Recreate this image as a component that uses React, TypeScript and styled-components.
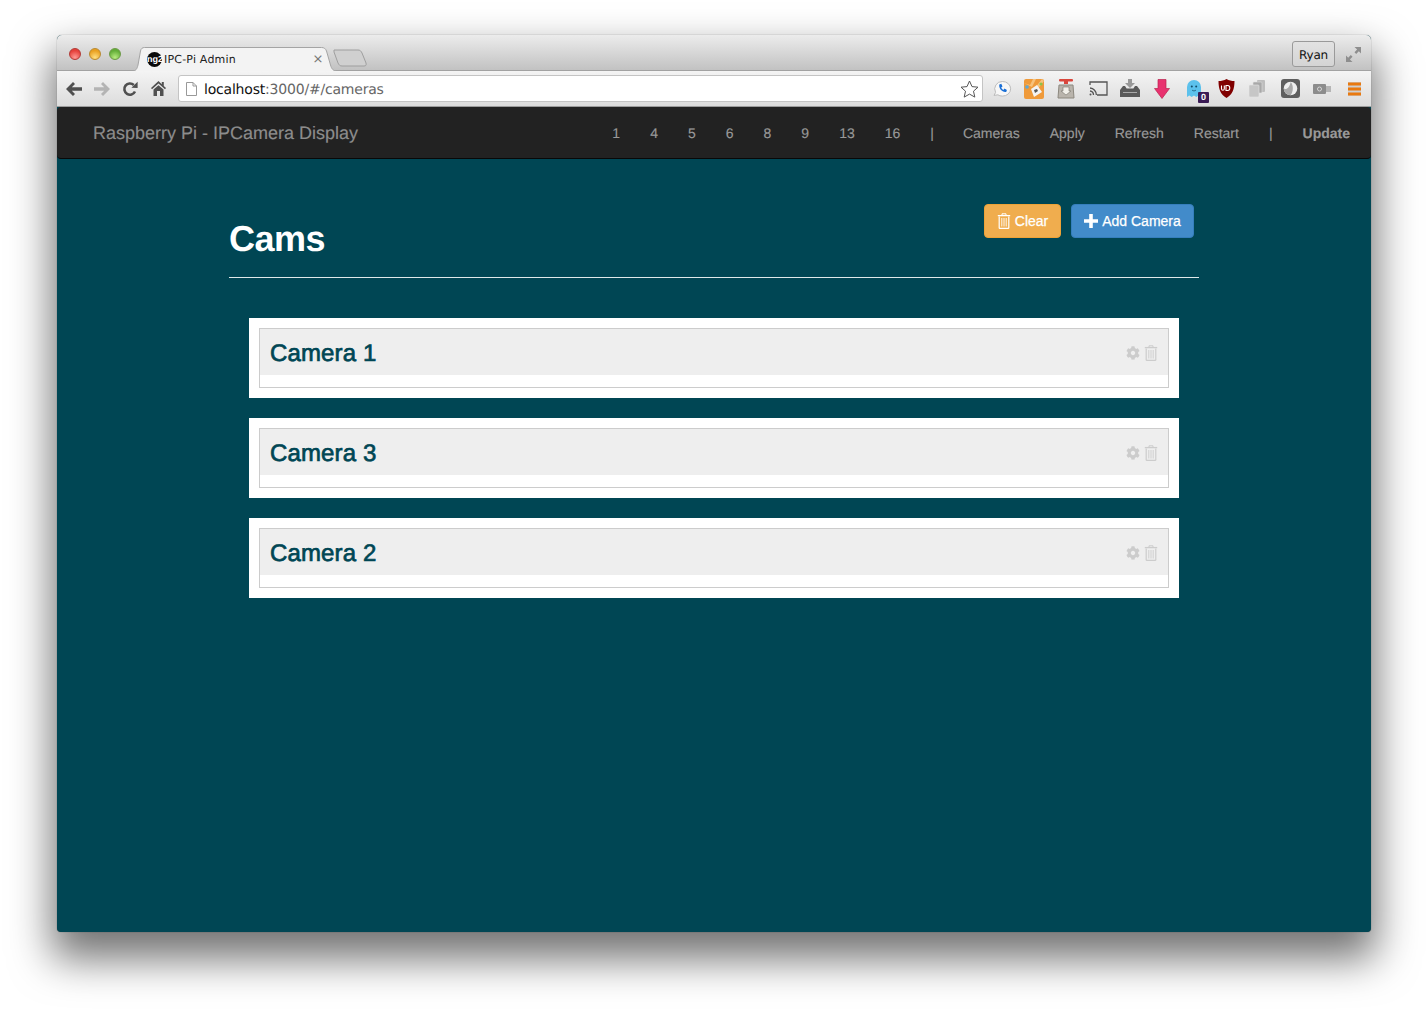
import styled, { createGlobalStyle } from "styled-components";
import { FaCog } from "react-icons/fa";

const GlobalStyle = createGlobalStyle`
  html, body {
    margin: 0;
    padding: 0;
    background: #fff;
    font-family: "Liberation Sans", Arial, sans-serif;
    text-rendering: geometricPrecision;
  }
`;

const Desktop = styled.div`
  width: 1428px;
  height: 1011px;
  box-sizing: border-box;
  padding: 35px 57px 79px;
  overflow: hidden;
`;

const BrowserWindow = styled.div`
  height: 897px;
  display: flex;
  flex-direction: column;
  background: #004654;
  border-radius: 5px 5px 4px 4px;
  overflow: hidden;
  box-shadow: 0 22px 42px 5px rgba(0, 0, 0, 0.55), 0 0 1px rgba(0, 0, 0, 0.6);
`;

const TitleBar = styled.div`
  height: 36px;
  flex: none;
  box-sizing: border-box;
  display: flex;
  align-items: flex-end;
  padding-left: 12px;
  background: linear-gradient(#ececec, #c2c2c2);
  border-bottom: 1px solid #a2a2a2;
`;

const Lights = styled.div`
  display: flex;
  gap: 8px;
  align-self: flex-start;
  margin-top: 13px;
`;

const Light = styled.span<{ $color: string; $glow: string; $edge: string }>`
  width: 12px;
  height: 12px;
  border-radius: 50%;
  box-sizing: border-box;
  border: 1px solid ${({ $edge }) => $edge};
  background: radial-gradient(circle at 50% 85%, ${({ $glow }) => $glow} 0%, ${({ $color }) => $color} 70%);
`;

const Tab = styled.div`
  position: relative;
  width: 205px;
  height: 24px;
  margin-left: 11px;
  margin-bottom: -1px;
  display: flex;
  align-items: center;
  padding: 0 6px 0 15px;
  box-sizing: border-box;
  font-family: "DejaVu Sans", sans-serif;
  font-size: 11px;
  letter-spacing: 0.2px;
  color: #222;
`;

const TabShape = styled.svg`
  position: absolute;
  left: 0;
  top: 0;
`;

const Favicon = styled.span`
  position: relative;
  width: 15px;
  height: 15px;
  border-radius: 50%;
  background: #0a0a0a;
  color: #fff;
  font-family: "Liberation Sans", sans-serif;
  font-weight: bold;
  font-size: 9px;
  letter-spacing: 0;
  line-height: 15px;
  text-align: center;
  flex: none;
  margin-right: 2px;
`;

const TabTitle = styled.span`
  position: relative;
  flex: 1;
`;

const TabClose = styled.span`
  position: relative;
  width: 26px;
  color: #777;
  font-size: 13px;
  text-align: center;
`;

const NewTab = styled.svg`
  margin-left: -4px;
  margin-bottom: 3px;
`;

const TitleRight = styled.div`
  margin-left: auto;
  align-self: flex-start;
  display: flex;
  align-items: center;
  gap: 11px;
  padding: 6px 10px 0 0;
`;

const UserButton = styled.div`
  width: 43px;
  height: 26px;
  box-sizing: border-box;
  border: 1px solid #9a9a9a;
  border-radius: 3px;
  font-family: "DejaVu Sans", sans-serif;
  font-size: 12px;
  letter-spacing: -0.2px;
  line-height: 26px;
  text-align: center;
  color: #111;
  background: linear-gradient(#e2e2e2, #d4d4d4);
`;

const Toolbar = styled.div`
  height: 36px;
  flex: none;
  box-sizing: border-box;
  display: flex;
  align-items: center;
  padding-left: 3px;
  background: linear-gradient(#f4f4f4, #dcdcdc);
  border-bottom: 1px solid #9c9c9c;
`;

const NavButton = styled.div`
  width: 28px;
  height: 28px;
  display: flex;
  align-items: center;
  justify-content: center;
`;

const AddressBar = styled.div`
  width: 805px;
  height: 27px;
  margin-left: 6px;
  box-sizing: border-box;
  display: flex;
  align-items: center;
  padding: 0 3px 0 7px;
  background: #fff;
  border: 1px solid #c4c4c4;
  border-radius: 3px;
`;

const Url = styled.div`
  margin-left: 7px;
  padding-top: 2px;
  flex: 1;
  font-family: "DejaVu Sans", sans-serif;
  font-size: 14px;
  letter-spacing: -0.2px;
  color: #666;
`;

const UrlHost = styled.span`
  color: #111;
`;

const Extensions = styled.div`
  display: flex;
  margin-left: 3px;
`;

const Extension = styled.div`
  position: relative;
  width: 32px;
  height: 28px;
  display: flex;
  align-items: center;
  justify-content: center;
`;

const CountBadge = styled.span`
  position: absolute;
  left: 20px;
  top: 17px;
  width: 11px;
  height: 11px;
  border-radius: 1px;
  background: #3a1a54;
  color: #fff;
  font-size: 9px;
  font-weight: bold;
  line-height: 11px;
  text-align: center;
`;

const Navbar = styled.nav`
  height: 52px;
  flex: none;
  box-sizing: border-box;
  display: flex;
  align-items: center;
  padding: 0 21px 0 36px;
  background: #222;
  border-bottom: 1px solid #080808;
  border-radius: 4px;
  -webkit-text-stroke: 0.15px currentColor;
`;

const Brand = styled.a`
  padding-top: 2px;
  font-size: 18px;
  color: #8c8c8c;
`;

const NavLinks = styled.div`
  margin-left: auto;
  display: flex;
  gap: 29px;
  font-size: 14px;
  color: #999;
`;

const NavGroup = styled.div`
  display: flex;
  gap: 30px;
`;

const NavLink = styled.a<{ $strong?: boolean }>`
  font-weight: ${({ $strong }) => ($strong ? "bold" : "normal")};
`;

const Main = styled.main`
  flex: 1;
  padding: 45px 172px 0;
`;

const PageHeader = styled.header`
  height: 73px;
  display: flex;
  justify-content: space-between;
  align-items: flex-start;
  padding-right: 5px;
  border-bottom: 1px solid #dfe9ea;
`;

const Title = styled.h1`
  margin: 15px 0 0;
  font-size: 36px;
  line-height: 40px;
  font-weight: bold;
  letter-spacing: -0.5px;
  color: #fff;
`;

const Actions = styled.div`
  display: flex;
  gap: 10px;
`;

const Button = styled.button<{ $color: string; $edge: string; $width: number }>`
  width: ${({ $width }) => $width}px;
  height: 34px;
  padding: 0;
  display: flex;
  align-items: center;
  justify-content: center;
  gap: 4px;
  font-family: inherit;
  font-size: 14px;
  color: #fff;
  background: ${({ $color }) => $color};
  border: 1px solid ${({ $edge }) => $edge};
  border-radius: 4px;
  -webkit-text-stroke: 0.25px #fff;
`;

const CameraList = styled.section`
  margin-top: 40px;
  padding: 0 20px;
  display: flex;
  flex-direction: column;
  gap: 20px;
`;

const CameraCard = styled.article`
  background: #fff;
  padding: 10px;
`;

const Panel = styled.div`
  height: 60px;
  box-sizing: border-box;
  border: 1px solid #ccc;
`;

const PanelHeading = styled.div`
  height: 46px;
  box-sizing: border-box;
  display: flex;
  align-items: center;
  justify-content: space-between;
  padding: 2px 10px 0;
  background: #eee;
`;

const CameraName = styled.h2`
  margin: 0;
  padding-top: 2px;
  font-size: 24px;
  font-weight: normal;
  letter-spacing: 0.15px;
  color: #004654;
  -webkit-text-stroke: 0.7px #004654;
`;

const PanelIcons = styled.div`
  display: flex;
  align-items: center;
  gap: 4px;
  color: #ccc;
`;

const TrashIcon = ({ color, size = 14 }: { color: string; size?: number }) => (
  <svg width={size} height={size + 2} viewBox="0 0 14 16" fill="none" stroke={color}>
    <path d="M5 2.200V.8h4v1.400" strokeWidth="1" />
    <path d="M.8 2.600h12.400" strokeWidth="1.300" />
    <path d="M2.200 3.500v11.200c0 .4.300.7.7.7h8.200c.4 0 .7-.3.7-.7V3.500" strokeWidth="1.200" />
    <path d="M4.800 5v8.500M7 5v8.500M9.200 5v8.500" strokeWidth=".9" />
  </svg>
);

const PlusIcon = () => (
  <svg width="14" height="14" viewBox="0 0 14 14" fill="#fff">
    <path d="M5.200 0h3.600v5.200H14v3.600H8.800V14H5.200V8.800H0V5.200h5.200z" />
  </svg>
);

const BackIcon = ({ color }: { color: string }) => (
  <svg width="16" height="14" viewBox="0 0 16 14" fill={color}>
    <path d="M7 0l2 2-3.200 3.300H16v3.400H5.800L9 12l-2 2-7-7z" />
  </svg>
);

const ForwardIcon = ({ color }: { color: string }) => (
  <svg width="16" height="14" viewBox="0 0 16 14" fill={color}>
    <path d="M9 0L7 2l3.200 3.300H0v3.400h10.200L7 12l2 2 7-7z" />
  </svg>
);

const ReloadIcon = () => (
  <svg width="16" height="16" viewBox="0 0 16 16" fill="none">
    <path d="M13 10.500A5.600 5.600 0 1 1 11.800 4" stroke="#505050" strokeWidth="2.600" />
    <path d="M9.400 6.800L15.600 7V.8z" fill="#505050" />
  </svg>
);

const HomeIcon = () => (
  <svg width="15" height="15" viewBox="0 0 15 15" fill="#505050">
    <path d="M7.500 0L0 7l1 1.200L7.500 2.400 14 8.200 15 7l-2.200-2V1h-2v2.200z" />
    <path d="M2.500 8.600L7.500 4.200l5 4.400V15H9V10H6v5H2.500z" />
  </svg>
);

const PageIcon = () => (
  <svg width="11" height="14" viewBox="0 0 11 14" fill="#fff" stroke="#999">
    <path d="M.5.5h6.500l3.500 3.500v9.500H.5z" />
    <path d="M7 .5V4h3.500" fill="none" />
  </svg>
);

const StarIcon = () => (
  <svg width="19" height="18" viewBox="0 0 19 18" fill="#fff" stroke="#555">
    <path d="M9.500 1l2.500 5.600 6 .6-4.500 4 1.300 5.900-5.300-3-5.300 3 1.300-5.900-4.500-4 6-.6z" />
  </svg>
);

const PhoneBubbleIcon = () => (
  <svg width="20" height="18" viewBox="0 0 20 18">
    <path d="M10.500 1.500a8 7.200 0 0 1 0 14.600c-2 0-3.400-.5-4.600-1.300L2 15.400l1.600-3A7.400 7.400 0 0 1 10.500 1.500z" fill="#f7f7f7" stroke="#bbb" />
    <path d="M7.300 4.500l2-.7 1.200 2.700-1.300 1c.4 1 1.200 1.900 2.200 2.400l1.100-1.300 2.400 1.300-.7 2c-3.800.7-7.600-3.300-6.900-7.400z" fill="#1a6fd6" />
  </svg>
);

const ToolsIcon = () => (
  <svg width="20" height="20" viewBox="0 0 20 20">
    <rect width="20" height="20" rx="2" fill="#ef9a3a" />
    <path d="M0 4l6 2 3-6h3L8 8zM20 2l-7 9-2-2 7-9z" fill="#f7c27c" />
    <path d="M7 10l6-4 5 7-8 5z" fill="#f4f4f4" />
    <path d="M10 11l3-1 1 2-3 2z" fill="#555" />
    <circle cx="3" cy="8" r="1.800" fill="#5da9d8" />
    <circle cx="17" cy="5" r="1.600" fill="#8bc34a" />
  </svg>
);

const TransmissionIcon = () => (
  <svg width="18" height="20" viewBox="0 0 18 20">
    <rect x="2" y="0" width="14" height="2.600" rx="1" fill="#d9463c" />
    <rect x="7" y="0" width="4" height="5" fill="#d9463c" />
    <path d="M2 6h14l1 13H1z" fill="#b9b4ac" stroke="#8c887f" />
    <path d="M6 8h6v4h2l-5 4-5-4h2z" fill="#f1efe9" stroke="#77736c" strokeWidth=".6" />
  </svg>
);

const CastIcon = () => (
  <svg width="19" height="15" viewBox="0 0 19 15" fill="none" stroke="#555" strokeWidth="1.300">
    <path d="M1 4V1h17v13H8" />
    <path d="M1 7a7 7 0 0 1 6.400 7M1 10a4 4 0 0 1 3.500 4" />
    <circle cx="1.500" cy="13.500" r="1" fill="#555" stroke="none" />
  </svg>
);

const InboxIcon = () => (
  <svg width="20" height="19" viewBox="0 0 20 19" fill="#5a5a5a">
    <path d="M8 0h4v4h3l-5 5-5-5h3z" fill="#999" />
    <path d="M3 7h2l1.600 2.500h6.800L15 7h2l3 4v7H0v-7z" />
    <path d="M3 13h14v1H3z" fill="#a9a9a9" />
  </svg>
);

const DownArrowIcon = () => (
  <svg width="16" height="20" viewBox="0 0 16 20">
    <path d="M4 .5h8v9h3.500L8 19.500.5 9.500H4z" fill="#e8316f" stroke="#b9244f" strokeWidth=".7" />
  </svg>
);

const GhostIcon = () => (
  <svg width="14" height="17" viewBox="0 0 14 17">
    <path d="M0 17V7a7 7 0 0 1 14 0v10l-2.300-1.600L9.300 17 7 15.400 4.700 17l-2.400-1.600z" fill="#5cc1ec" />
    <circle cx="4.800" cy="6.500" r="1" fill="#134a66" />
    <circle cx="9.200" cy="6.500" r="1" fill="#134a66" />
    <path d="M5 10c1 1.200 3 1.200 4 0" fill="none" stroke="#134a66" strokeWidth=".7" />
  </svg>
);

const ShieldIcon = () => (
  <svg width="17" height="19" viewBox="0 0 17 19">
    <path d="M8.500 0c2.500 1.400 5 2 8 2 0 8-2 13.600-8 17C2.500 15.600.5 10 .5 2c3 0 5.500-.6 8-2z" fill="#800000" />
    <path d="M3.500 6.500v3.300c0 2 2.800 2 2.800 0V6.500M8 6.500h1.700c2.800 0 2.800 5 0 5H8z" fill="none" stroke="#fff" strokeWidth="1.100" />
  </svg>
);

const CopyIcon = () => (
  <svg width="18" height="17" viewBox="0 0 18 17">
    <rect x="8" y="0" width="8" height="12" rx="1" fill="#bdbdbd" />
    <rect x="4" y="2" width="9" height="11" rx="1" fill="#a8a8a8" stroke="#ddd" strokeWidth=".6" />
    <rect x="0" y="5" width="10" height="12" rx="1" fill="#c6c6c6" stroke="#e4e4e4" strokeWidth=".6" />
  </svg>
);

const LensIcon = () => (
  <svg width="19" height="19" viewBox="0 0 19 19">
    <rect width="19" height="19" rx="3" fill="#5e5e5e" />
    <circle cx="9.500" cy="9.500" r="6.800" fill="#eee" />
    <path d="M9.500 16.300a6.800 6.800 0 0 1-6.800-6.800c3 1.500 5.800-1 7-6.600 3 3 2.800 10-.2 13.400z" fill="#a8a8a8" />
  </svg>
);

const UsbIcon = () => (
  <svg width="18" height="10" viewBox="0 0 18 10">
    <rect width="13" height="10" rx="1" fill="#8c8c8c" />
    <rect x="13" y="2" width="5" height="6" fill="#b5b5b5" />
    <circle cx="6.500" cy="5" r="2" fill="none" stroke="#d6d6d6" />
  </svg>
);

const MenuIcon = () => (
  <svg width="13" height="14" viewBox="0 0 13 14">
    <rect width="13" height="14" fill="#cfcfcf" />
    <rect width="13" height="3" y=".5" fill="#e9790f" />
    <rect width="13" height="3" y="5.500" fill="#e9790f" />
    <rect width="13" height="3" y="10.500" fill="#e9790f" />
  </svg>
);

const FullscreenIcon = () => (
  <svg width="15" height="15" viewBox="0 0 15 15" fill="#8e8e8e">
    <path d="M8.500 0H15v6.500l-2.200-2.200-2.600 2.600-1.700-1.700 2.600-2.600zM6.500 15H0V8.500l2.200 2.200 2.600-2.600 1.700 1.700-2.600 2.600z" />
  </svg>
);

const cameras = ["Camera 1", "Camera 3", "Camera 2"];
const streams = ["1", "4", "5", "6", "8", "9", "13", "16", "|"];
const commands = ["Cameras", "Apply", "Refresh", "Restart", "|"];

function App(): React.ReactNode {
  return (
    <Desktop>
      <GlobalStyle />
      <BrowserWindow>
        <TitleBar>
          <Lights>
            <Light $color="#e5403a" $glow="#ff9a94" $edge="#b23a36" />
            <Light $color="#e9a020" $glow="#ffdf80" $edge="#b98a30" />
            <Light $color="#62ad38" $glow="#b8ec80" $edge="#6c9a45" />
          </Lights>
          <Tab>
            <TabShape width="205" height="24" viewBox="0 0 205 24">
              <path d="M0 24c4 0 5-2 6-6l2.500-14c.5-2.500 2-3.500 4-3.500h177c2.500 0 4 1 5 3.500l4 14c1 4 3 6 6 6" fill="#f3f3f3" stroke="#a4a4a4" />
            </TabShape>
            <Favicon>ng2</Favicon>
            <TabTitle>IPC-Pi Admin</TabTitle>
            <TabClose>×</TabClose>
          </Tab>
          <NewTab width="34" height="18" viewBox="0 0 34 18">
            <path d="M1 1h24c2 0 3 1 4 3l4 10c.5 2 0 3-2 3H9c-2 0-3-1-4-3L1 3z" fill="#d0d0d0" stroke="#9e9e9e" />
          </NewTab>
          <TitleRight>
            <UserButton>Ryan</UserButton>
            <FullscreenIcon />
          </TitleRight>
        </TitleBar>
        <Toolbar>
          <NavButton><BackIcon color="#505050" /></NavButton>
          <NavButton><ForwardIcon color="#b4b4b4" /></NavButton>
          <NavButton><ReloadIcon /></NavButton>
          <NavButton><HomeIcon /></NavButton>
          <AddressBar>
            <PageIcon />
            <Url>
              <UrlHost>localhost</UrlHost>:3000/#/cameras
            </Url>
            <StarIcon />
          </AddressBar>
          <Extensions>
            <Extension><PhoneBubbleIcon /></Extension>
            <Extension><ToolsIcon /></Extension>
            <Extension><TransmissionIcon /></Extension>
            <Extension><CastIcon /></Extension>
            <Extension><InboxIcon /></Extension>
            <Extension><DownArrowIcon /></Extension>
            <Extension>
              <GhostIcon />
              <CountBadge>0</CountBadge>
            </Extension>
            <Extension><ShieldIcon /></Extension>
            <Extension><CopyIcon /></Extension>
            <Extension><LensIcon /></Extension>
            <Extension><UsbIcon /></Extension>
            <Extension><MenuIcon /></Extension>
          </Extensions>
        </Toolbar>
        <Navbar>
          <Brand>Raspberry Pi - IPCamera Display</Brand>
          <NavLinks>
            <NavGroup>
              {streams.map((item, i) => (
                <NavLink key={i}>{item}</NavLink>
              ))}
            </NavGroup>
            <NavGroup>
              {commands.map((item, i) => (
                <NavLink key={i}>{item}</NavLink>
              ))}
              <NavLink $strong>Update</NavLink>
            </NavGroup>
          </NavLinks>
        </Navbar>
        <Main>
          <PageHeader>
            <Title>Cams</Title>
            <Actions>
              <Button $color="#f0ad4e" $edge="#eea236" $width={77}>
                <TrashIcon color="#fff" />
                Clear
              </Button>
              <Button $color="#428bca" $edge="#357ebd" $width={123}>
                <PlusIcon />
                Add Camera
              </Button>
            </Actions>
          </PageHeader>
          <CameraList>
            {cameras.map((name) => (
              <CameraCard key={name}>
                <Panel>
                  <PanelHeading>
                    <CameraName>{name}</CameraName>
                    <PanelIcons>
                      <FaCog size={14} />
                      <TrashIcon color="#ccc" />
                    </PanelIcons>
                  </PanelHeading>
                </Panel>
              </CameraCard>
            ))}
          </CameraList>
        </Main>
      </BrowserWindow>
    </Desktop>
  );
}

export default App;
